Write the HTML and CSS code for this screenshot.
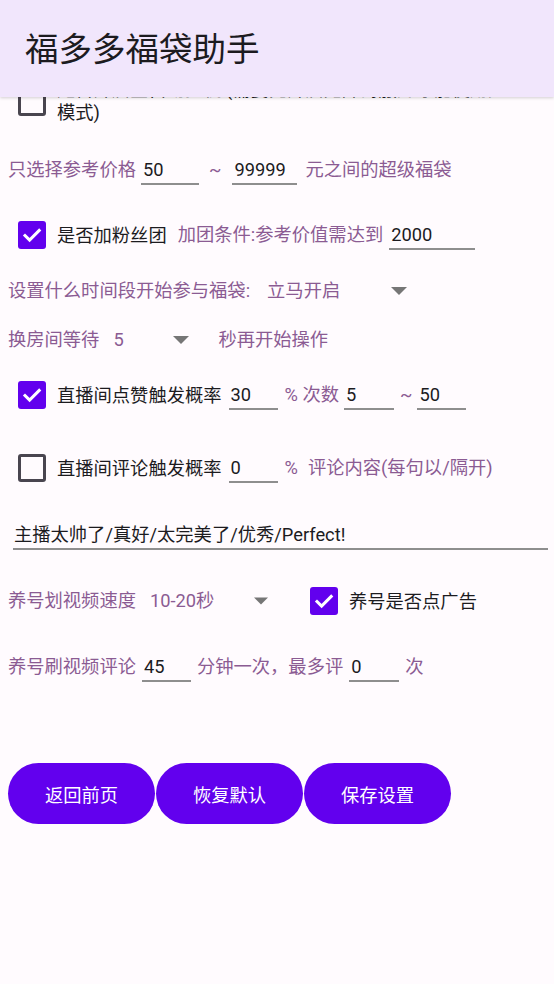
FILE: index.html
```html
<!DOCTYPE html>
<html lang="zh-CN">
<head>
<meta charset="utf-8">
<title>福多多福袋助手</title>
<link rel="stylesheet" href="styles.css">
</head>
<body>
<div class="screen">
  <header class="appbar"><h1 class="title">福多多福袋助手</h1></header>

  <main class="content">
    <div class="row row-adv">
      <span class="cb cb-off cb-top"></span>
      <span class="cb-label adv-label">是否开启全自动挂机 (需要先开启无障碍服务才能使用此<br>模式)</span>
    </div>

    <div class="row row-price">
      <span class="lbl">只选择参考价格</span>
      <span class="field w58 ml5">50</span>
      <span class="lbl ml10">~</span>
      <span class="field w65 ml11">99999</span>
      <span class="lbl ml8">元之间的超级福袋</span>
    </div>

    <div class="row row-fans">
      <span class="cb cb-on"><svg viewBox="0 0 28 28" width="28" height="28"><path d="M7 14.5l4.6 4.6L21.2 9.4" fill="none" stroke="#fff" stroke-width="3" stroke-linecap="square"/></svg></span>
      <span class="cb-label">是否加粉丝团</span>
      <span class="lbl ml11">加团条件:参考价值需达到</span>
      <span class="field w86 ml6">2000</span>
    </div>

    <div class="row row-time">
      <span class="lbl">设置什么时间段开始参与福袋:</span>
      <span class="spinner sp-time"><span class="sp-text">立马开启</span><svg class="arrow" viewBox="0 0 16 8" width="16" height="8"><path d="M0 0h16L8 8z" fill="#767676"/></svg></span>
    </div>

    <div class="row row-wait">
      <span class="lbl">换房间等待</span>
      <span class="spinner sp-wait"><span class="sp-text">5</span><svg class="arrow" viewBox="0 0 16 8" width="16" height="8"><path d="M0 0h16L8 8z" fill="#767676"/></svg></span>
      <span class="lbl ml29">秒再开始操作</span>
    </div>

    <div class="row row-like">
      <span class="cb cb-on"><svg viewBox="0 0 28 28" width="28" height="28"><path d="M7 14.5l4.6 4.6L21.2 9.4" fill="none" stroke="#fff" stroke-width="3" stroke-linecap="square"/></svg></span>
      <span class="cb-label">直播间点赞触发概率</span>
      <span class="field w49 ml7">30</span>
      <span class="lbl ml7">% 次数</span>
      <span class="field w50 ml5">5</span>
      <span class="lbl ml6">~</span>
      <span class="field w49 ml5">50</span>
    </div>

    <div class="row row-comment">
      <span class="cb cb-off"></span>
      <span class="cb-label">直播间评论触发概率</span>
      <span class="field w49 ml7">0</span>
      <span class="lbl ml7">%</span>
      <span class="lbl ml10">评论内容(每句以/隔开)</span>
    </div>

    <div class="row row-text">
      <span class="field wide">主播太帅了/真好/太完美了/优秀/Perfect!</span>
    </div>

    <div class="row row-speed">
      <span class="lbl">养号划视频速度</span>
      <span class="spinner sp-speed"><span class="sp-text">10-20秒</span><svg class="arrow" viewBox="0 0 16 8" width="16" height="8"><path d="M0 0h16L8 8z" fill="#767676"/></svg></span>
      <span class="cb cb-on"><svg viewBox="0 0 28 28" width="28" height="28"><path d="M7 14.5l4.6 4.6L21.2 9.4" fill="none" stroke="#fff" stroke-width="3" stroke-linecap="square"/></svg></span>
      <span class="cb-label">养号是否点广告</span>
    </div>

    <div class="row row-raise">
      <span class="lbl">养号刷视频评论</span>
      <span class="field w49 ml6">45</span>
      <span class="lbl ml6">分钟一次，最多评</span>
      <span class="field w50 ml6">0</span>
      <span class="lbl ml6">次</span>
    </div>

    <div class="buttons">
      <button class="btn">返回前页</button>
      <button class="btn">恢复默认</button>
      <button class="btn">保存设置</button>
    </div>
  </main>
</div>
</body>
</html>
```

FILE: styles.css
```css
html, body {
  margin: 0;
  padding: 0;
}
body {
  background: #fffbfe;
  font-family: Roboto, "Noto Sans CJK SC", sans-serif;
  font-size: 18.3px;
  color: #1c1b1f;
}
.screen {
  position: relative;
  width: 554px;
  height: 984px;
  overflow: hidden;
  background: #fffbfe;
}
.appbar {
  position: absolute;
  left: 0;
  top: 0;
  right: 0;
  height: 97px;
  background: #f1e6fc;
  box-shadow: 0 1px 3px rgba(0,0,0,0.18);
  z-index: 2;
  display: flex;
  align-items: center;
}
.title {
  margin: 0 0 0 25px;
  font-size: 33.5px;
  font-weight: 400;
  color: #1c1b1f;
  line-height: 40px;
  padding-top: 2px;
}
.content {
  display: flex;
  flex-direction: column;
}
.row {
  display: flex;
  align-items: center;
  height: 30px;
  white-space: nowrap;
}
.row-adv {
  height: 52px;
  align-items: flex-start;
  margin-top: 78px;
}
.adv-label { line-height: 27px; }
.row-price { margin-top: 25px; }
.row-fans { margin-top: 35px; }
.row-time { margin-top: 26px; }
.row-wait { margin-top: 19px; }
.row-like { margin-top: 25px; }
.row-comment { margin-top: 43px; }
.row-text { margin-top: 37px; }
.row-speed { margin-top: 36px; }
.row-raise { margin-top: 36px; }

.lbl {
  color: #8b5b93;
  line-height: 22px;
}
.row > .lbl:first-child { margin-left: 8px; }

.cb {
  box-sizing: border-box;
  width: 28px;
  height: 28px;
  border-radius: 3px;
  flex: none;
  margin-left: 18px;
  display: flex;
}
.cb-off {
  border: 3px solid #49454f;
}
.cb-on {
  background: #6200ee;
}
.cb-top { margin-top: 10px; }
.cb-label {
  margin-left: 11px;
  color: #1c1b1f;
  line-height: 23px;
}
.row-speed .cb { margin-left: 42px; }

.field {
  box-sizing: border-box;
  height: 30px;
  padding: 4px 0 0 2px;
  line-height: 22px;
  border-bottom: 2px solid #8e8e8e;
  color: #1c1b1f;
  flex: none;
  overflow: hidden;
}
.w49 { width: 49px; }
.w50 { width: 50px; }
.w58 { width: 58px; }
.w65 { width: 65px; }
.w86 { width: 86px; }
.wide {
  width: 535px;
  margin-left: 13px;
  padding-left: 1px;
}

.ml5 { margin-left: 5px; }
.ml6 { margin-left: 6px; }
.ml7 { margin-left: 7px; }
.ml8 { margin-left: 8px; }
.ml10 { margin-left: 10px; }
.ml11 { margin-left: 11px; }
.ml29 { margin-left: 29px; }

.spinner {
  display: flex;
  align-items: center;
  color: #8b5b93;
  line-height: 22px;
  flex: none;
}
.sp-text { flex: none; }
.arrow { margin-left: auto; flex: none; }
.sp-time { margin-left: 17px; width: 140px; }
.sp-wait { margin-left: 14px; width: 76px; }
.sp-speed { margin-left: 14px; width: 118px; }
.sp-speed .arrow { width: 14px; }

.buttons {
  display: flex;
  gap: 1px;
  margin-top: 81px;
  padding-left: 8px;
}
.btn {
  width: 147px;
  height: 61px;
  border: none;
  border-radius: 31px;
  background: #6200ee;
  color: #ffffff;
  font-family: Roboto, "Noto Sans CJK SC", sans-serif;
  font-size: 18.3px;
  padding: 0;
}
```
